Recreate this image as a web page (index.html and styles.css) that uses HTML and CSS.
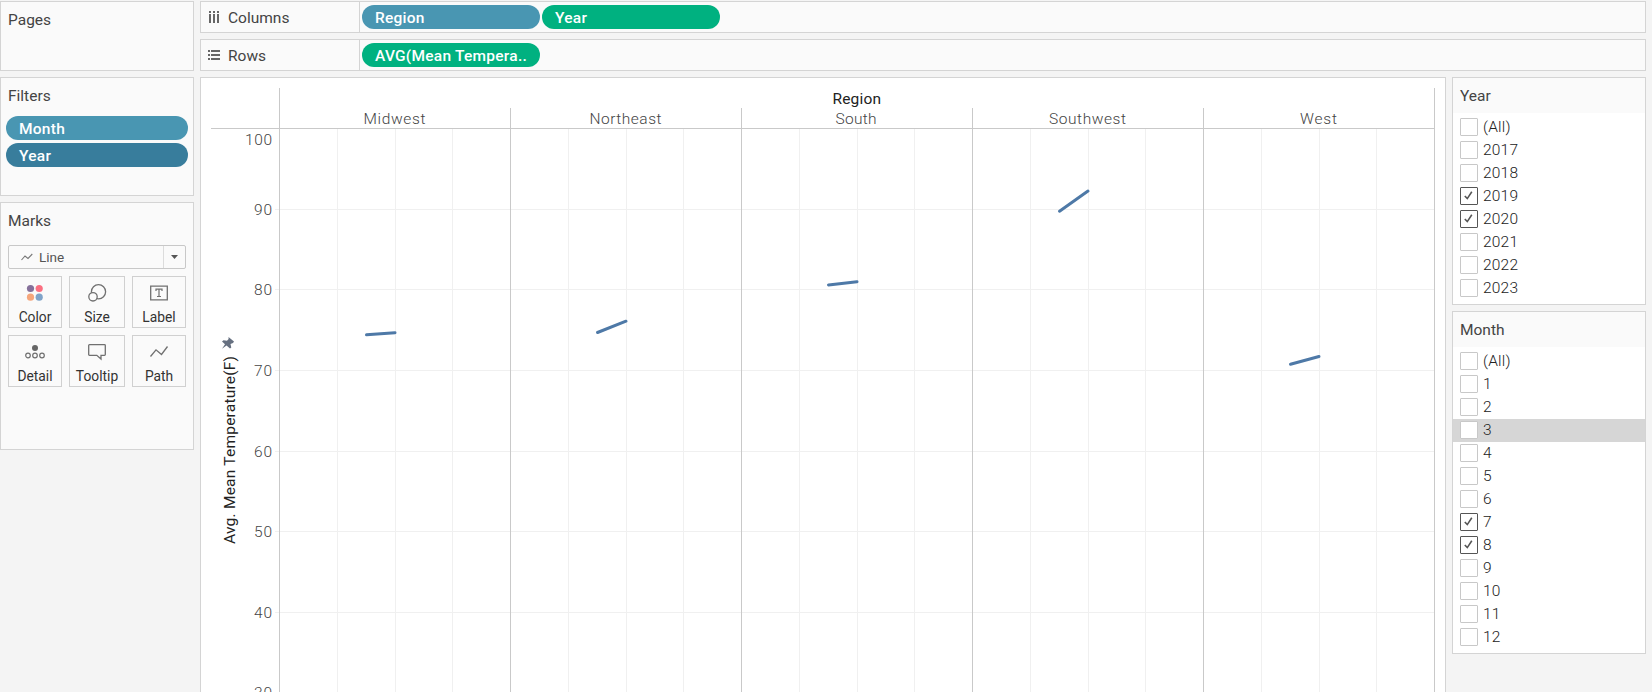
FILE: index.html
```
<!DOCTYPE html>
<html lang="en">
<head>
<meta charset="utf-8">
<title>Mean Temperature by Region</title>
<link rel="stylesheet" href="styles.css">
</head>
<body>
<div class="app">
  <aside class="side">
    <section class="card pages"><h2>Pages</h2></section>
    <section class="card filters">
      <h2>Filters</h2>
      <div class="pill blue">Month</div>
      <div class="pill dark">Year</div>
    </section>
    <section class="card marks">
      <h2>Marks</h2>
      <div class="select">
        <svg class="sel-icon" width="12" height="8" viewBox="0 0 12 8"><path d="M.5 7L4 3L7 5.500L11.300 1" fill="none" stroke="#777" stroke-width="1.100"/></svg>
        <span class="sel-text">Line</span>
        <span class="arrow"><svg width="7" height="4" viewBox="0 0 7 4"><path d="M0 0H7L3.500 4Z" fill="#555"/></svg></span>
      </div>
      <div class="grid">
        <button class="mark"><svg width="20" height="18" viewBox="0 0 20 18"><circle cx="5.500" cy="4.500" r="3.600" fill="#85709a"/><circle cx="14.200" cy="4.500" r="3.600" fill="#fb6f81"/><circle cx="5.500" cy="13.200" r="3.600" fill="#f5a67c"/><circle cx="14.200" cy="13.200" r="3.600" fill="#7fa3c9"/></svg><span>Color</span></button>
        <button class="mark"><svg width="20" height="18" viewBox="0 0 20 18"><g fill="#fafafa" stroke="#707070" stroke-width="1.300"><circle cx="11.500" cy="7.800" r="7.100"/><circle cx="6" cy="12.800" r="4.200"/></g></svg><span>Size</span></button>
        <button class="mark"><svg width="20" height="18" viewBox="0 0 20 18"><path d="M1.700 2.200H18.300V15.800H1.700Z" fill="none" stroke="#707070" stroke-width="1.300"/><path d="M7 7V5.200H13V7M10 5.200V12.500M8 12.500H12" fill="none" stroke="#707070" stroke-width="1.200"/></svg><span>Label</span></button>
        <button class="mark"><svg width="20" height="18" viewBox="0 0 20 18"><circle cx="10" cy="5" r="3" fill="#666"/><g fill="none" stroke="#707070" stroke-width="1.200"><circle cx="3" cy="12.500" r="2.300"/><circle cx="10" cy="12.500" r="2.300"/><circle cx="17" cy="12.500" r="2.300"/></g></svg><span>Detail</span></button>
        <button class="mark"><svg width="20" height="18" viewBox="0 0 20 18"><path d="M2.500 1.700H17.500Q18.300 1.700 18.300 2.500V11.500Q18.300 12.300 17.500 12.300H14V16L9.800 12.300H2.500Q1.700 12.300 1.700 11.500V2.500Q1.700 1.700 2.500 1.700Z" fill="none" stroke="#707070" stroke-width="1.300"/></svg><span>Tooltip</span></button>
        <button class="mark"><svg width="20" height="18" viewBox="0 0 20 18"><path d="M1.500 13.500L7 6.800L12.500 11.500L18.500 3.500" fill="none" stroke="#707070" stroke-width="1.300"/></svg><span>Path</span></button>
      </div>
    </section>
  </aside>
  <main class="main">
    <div class="shelf">
      <div class="shelf-name"><svg width="12" height="12" viewBox="0 0 12 12" fill="#666"><path d="M1 0h2v2H1zM5 0h2v2H5zM9 0h2v2H9zM1 3h2v9H1zM5 3h2v9H5zM9 3h2v9H9z"/></svg><span>Columns</span></div>
      <div class="pill blue">Region</div>
      <div class="pill green">Year</div>
    </div>
    <div class="shelf">
      <div class="shelf-name"><svg width="12" height="12" viewBox="0 0 12 12" fill="#666"><path d="M0 1h2v2H0zM0 5h2v2H0zM0 9h2v2H0zM3 1h9v2H3zM3 5h9v2H3zM3 9h9v2H3z"/></svg><span>Rows</span></div>
      <div class="pill green">AVG(Mean Tempera..</div>
    </div>
    <div class="work">
      <section class="view">
        <svg class="chart" width="1244" height="614" viewBox="201 78 1244 614">
          <path class="minor" d="M275 209.500H1434M275 289.500H1434M275 370.500H1434M275 451.500H1434M275 531.500H1434M275 612.500H1434"/>
          <path class="minor" d="M337.500 129V692M395.500 129V692M452.500 129V692M568.500 129V692M626.500 129V692M683.500 129V692M799.500 129V692M857.500 129V692M914.500 129V692M1030.500 129V692M1088.500 129V692M1145.500 129V692M1261.500 129V692M1319.500 129V692M1376.500 129V692"/>
          <path class="major" d="M211 128.500H1435M279.500 88V692M510.500 108V692M741.500 108V692M972.500 108V692M1203.500 108V692M1434.500 88V692"/>
          <g class="line">
            <path d="M366.500 334.800L395 332.700"/>
            <path d="M597.500 332.500L626 321.200"/>
            <path d="M828.500 284.900L857 281.700"/>
            <path d="M1059.500 211.200L1088 191"/>
            <path d="M1290.500 364.300L1319 356.500"/>
          </g>
          <text class="strong" x="832.500" y="104" textLength="48.500">Region</text>
          <text x="363.500" y="124" textLength="62">Midwest</text>
          <text x="589.500" y="124" textLength="72">Northeast</text>
          <text x="835.500" y="124" textLength="41">South</text>
          <text x="1049" y="124" textLength="77">Southwest</text>
          <text x="1300" y="124" textLength="37">West</text>
          <g class="ticks">
            <text x="245" y="145" textLength="27">100</text>
            <text x="254" y="215" textLength="18">90</text>
            <text x="254" y="295" textLength="18">80</text>
            <text x="254" y="376" textLength="18">70</text>
            <text x="254" y="457" textLength="18">60</text>
            <text x="254" y="537" textLength="18">50</text>
            <text x="254" y="618" textLength="18">40</text>
            <text x="254" y="698" textLength="18">30</text>
          </g>
          <text class="strong" transform="translate(234.500 544) rotate(-90)" textLength="188">Avg. Mean Temperature(F)</text>
          <path fill="#667080" d="M228.500 337L234 341.500L233 343L230.500 344L231.300 347.500L230 348.500L226.500 345.500L222 348.800L225 344.200L222 341.500L223.500 340.300L227 340.800L228.600 339Z"/>
        </svg>
      </section>
      <aside class="quick">
        <section class="card list">
          <h2>Year</h2>
          <ul>
            <li><i></i>(All)</li><li><i></i>2017</li><li><i></i>2018</li>
            <li><i class="on"><svg width="9" height="9" viewBox="0 0 9 9"><path d="M.8 5L3.300 7.600L7.800 .8" fill="none" stroke="#555" stroke-width="1.600"/></svg></i>2019</li>
            <li><i class="on"><svg width="9" height="9" viewBox="0 0 9 9"><path d="M.8 5L3.300 7.600L7.800 .8" fill="none" stroke="#555" stroke-width="1.600"/></svg></i>2020</li>
            <li><i></i>2021</li><li><i></i>2022</li><li><i></i>2023</li>
          </ul>
        </section>
        <section class="card list">
          <h2>Month</h2>
          <ul>
            <li><i></i>(All)</li><li><i></i>1</li><li><i></i>2</li><li class="hover"><i></i>3</li><li><i></i>4</li><li><i></i>5</li><li><i></i>6</li>
            <li><i class="on"><svg width="9" height="9" viewBox="0 0 9 9"><path d="M.8 5L3.300 7.600L7.800 .8" fill="none" stroke="#555" stroke-width="1.600"/></svg></i>7</li>
            <li><i class="on"><svg width="9" height="9" viewBox="0 0 9 9"><path d="M.8 5L3.300 7.600L7.800 .8" fill="none" stroke="#555" stroke-width="1.600"/></svg></i>8</li>
            <li><i></i>9</li><li><i></i>10</li><li><i></i>11</li><li><i></i>12</li>
          </ul>
        </section>
      </aside>
    </div>
  </main>
</div>
</body>
</html>
```
FILE: styles.css
```
* { box-sizing: border-box; }
body { margin: 0; background: #f4f4f4; color: #333; font: 300 15.5px/20px Roboto, "Open Sans", sans-serif; overflow: hidden; }
h2, ul { margin: 0; padding: 0; font: inherit; list-style: none; }
.app { display: flex; gap: 6px; height: 692px; padding: 1px 6px 0 0; overflow: hidden; }
.side { width: 194px; flex: none; display: flex; flex-direction: column; gap: 6px; }
.card, .shelf, .view { border: 1px solid #d4d4d4; background: #fafafa; }
.card { flex: none; }
.side .card { padding: 8px 7px; }
.pages { height: 70px; }
.filters { height: 119px; }
.marks { height: 248px; }
h2 { font-weight: 400; color: #444; }
.pill { height: 24px; border-radius: 12px; padding: 0 13px; color: #fff; font-weight: 500; line-height: 26px; white-space: nowrap; letter-spacing: .25px; }
.blue { background: #4996b2; }
.dark { background: #387d9c; }
.green { background: #00b180; }
.filters .pill { margin: 0 -2px 3px; }
.filters h2 { margin-bottom: 10px; }
.select { display: flex; align-items: center; height: 24px; margin-top: 14px; border: 1px solid #c8c8c8; border-radius: 2px; font-size: 13.5px; font-weight: 400; color: #555; width: 178px; }
.sel-icon { margin-left: 12px; }
.sel-text { margin-left: 6px; flex: 1; }
.arrow { width: 22px; align-self: stretch; display: flex; align-items: center; justify-content: center; border-left: 1px solid #dcdcdc; }
.grid { display: grid; grid-template-columns: 54px 56px 54px; column-gap: 7px; row-gap: 7px; margin-top: 7px; }
.mark { height: 52px; padding: 7px 0 0; border: 1px solid #d0d0d0; background: #fafafa; display: flex; flex-direction: column; align-items: center; color: #333; font: 400 13.8px/18px Roboto, sans-serif; }
.mark span { margin-top: 6px; }
.main { flex: 1; min-width: 0; display: flex; flex-direction: column; gap: 6px; }
.shelf { height: 32px; flex: none; display: flex; gap: 2px; padding-top: 3px; }
.shelf-name { display: flex; width: 159px; height: 30px; margin-top: -3px; padding-left: 7px; gap: 8px; align-items: center; border-right: 1px solid #d4d4d4; font-weight: 400; color: #444; }
.shelf-name svg { margin-top: -1px; }
.shelf-name span { margin-top: 2px; }
.shelf .pill { width: 178px; }
.work { display: flex; gap: 6px; flex: 1; min-height: 0; }
.view { width: 1246px; border-bottom: 0; background: #fff; overflow: hidden; }
.chart { display: block; }
.chart text { font-size: 15.5px; font-weight: 300; fill: #444; }
.chart .strong { font-weight: 400; fill: #222; }
.minor { fill: none; stroke: #f0f0f0; }
.major { fill: none; stroke: #c9c9c9; }
.line { fill: none; stroke: #4e79a7; stroke-width: 3; stroke-linecap: round; }
.quick { width: 194px; display: flex; flex-direction: column; gap: 6px; }
.list { background: #fff; padding-bottom: 4px; }
.list h2 { height: 35px; padding: 8px 7px; background: #fafafa; }
.list ul { padding-top: 3px; }
.list li { display: flex; align-items: center; height: 23px; padding: 0 0 1px 7px; gap: 5px; font-weight: 300; color: #222; letter-spacing: .2px; }
.list i { width: 18px; height: 18px; border: 1px solid #c8c8c8; border-radius: 1px; background: #fff; display: block; }
.list .on { border-color: #555; padding: 3px; }
.on svg { display: block; }
.hover { background: #d6d6d6; }
```
